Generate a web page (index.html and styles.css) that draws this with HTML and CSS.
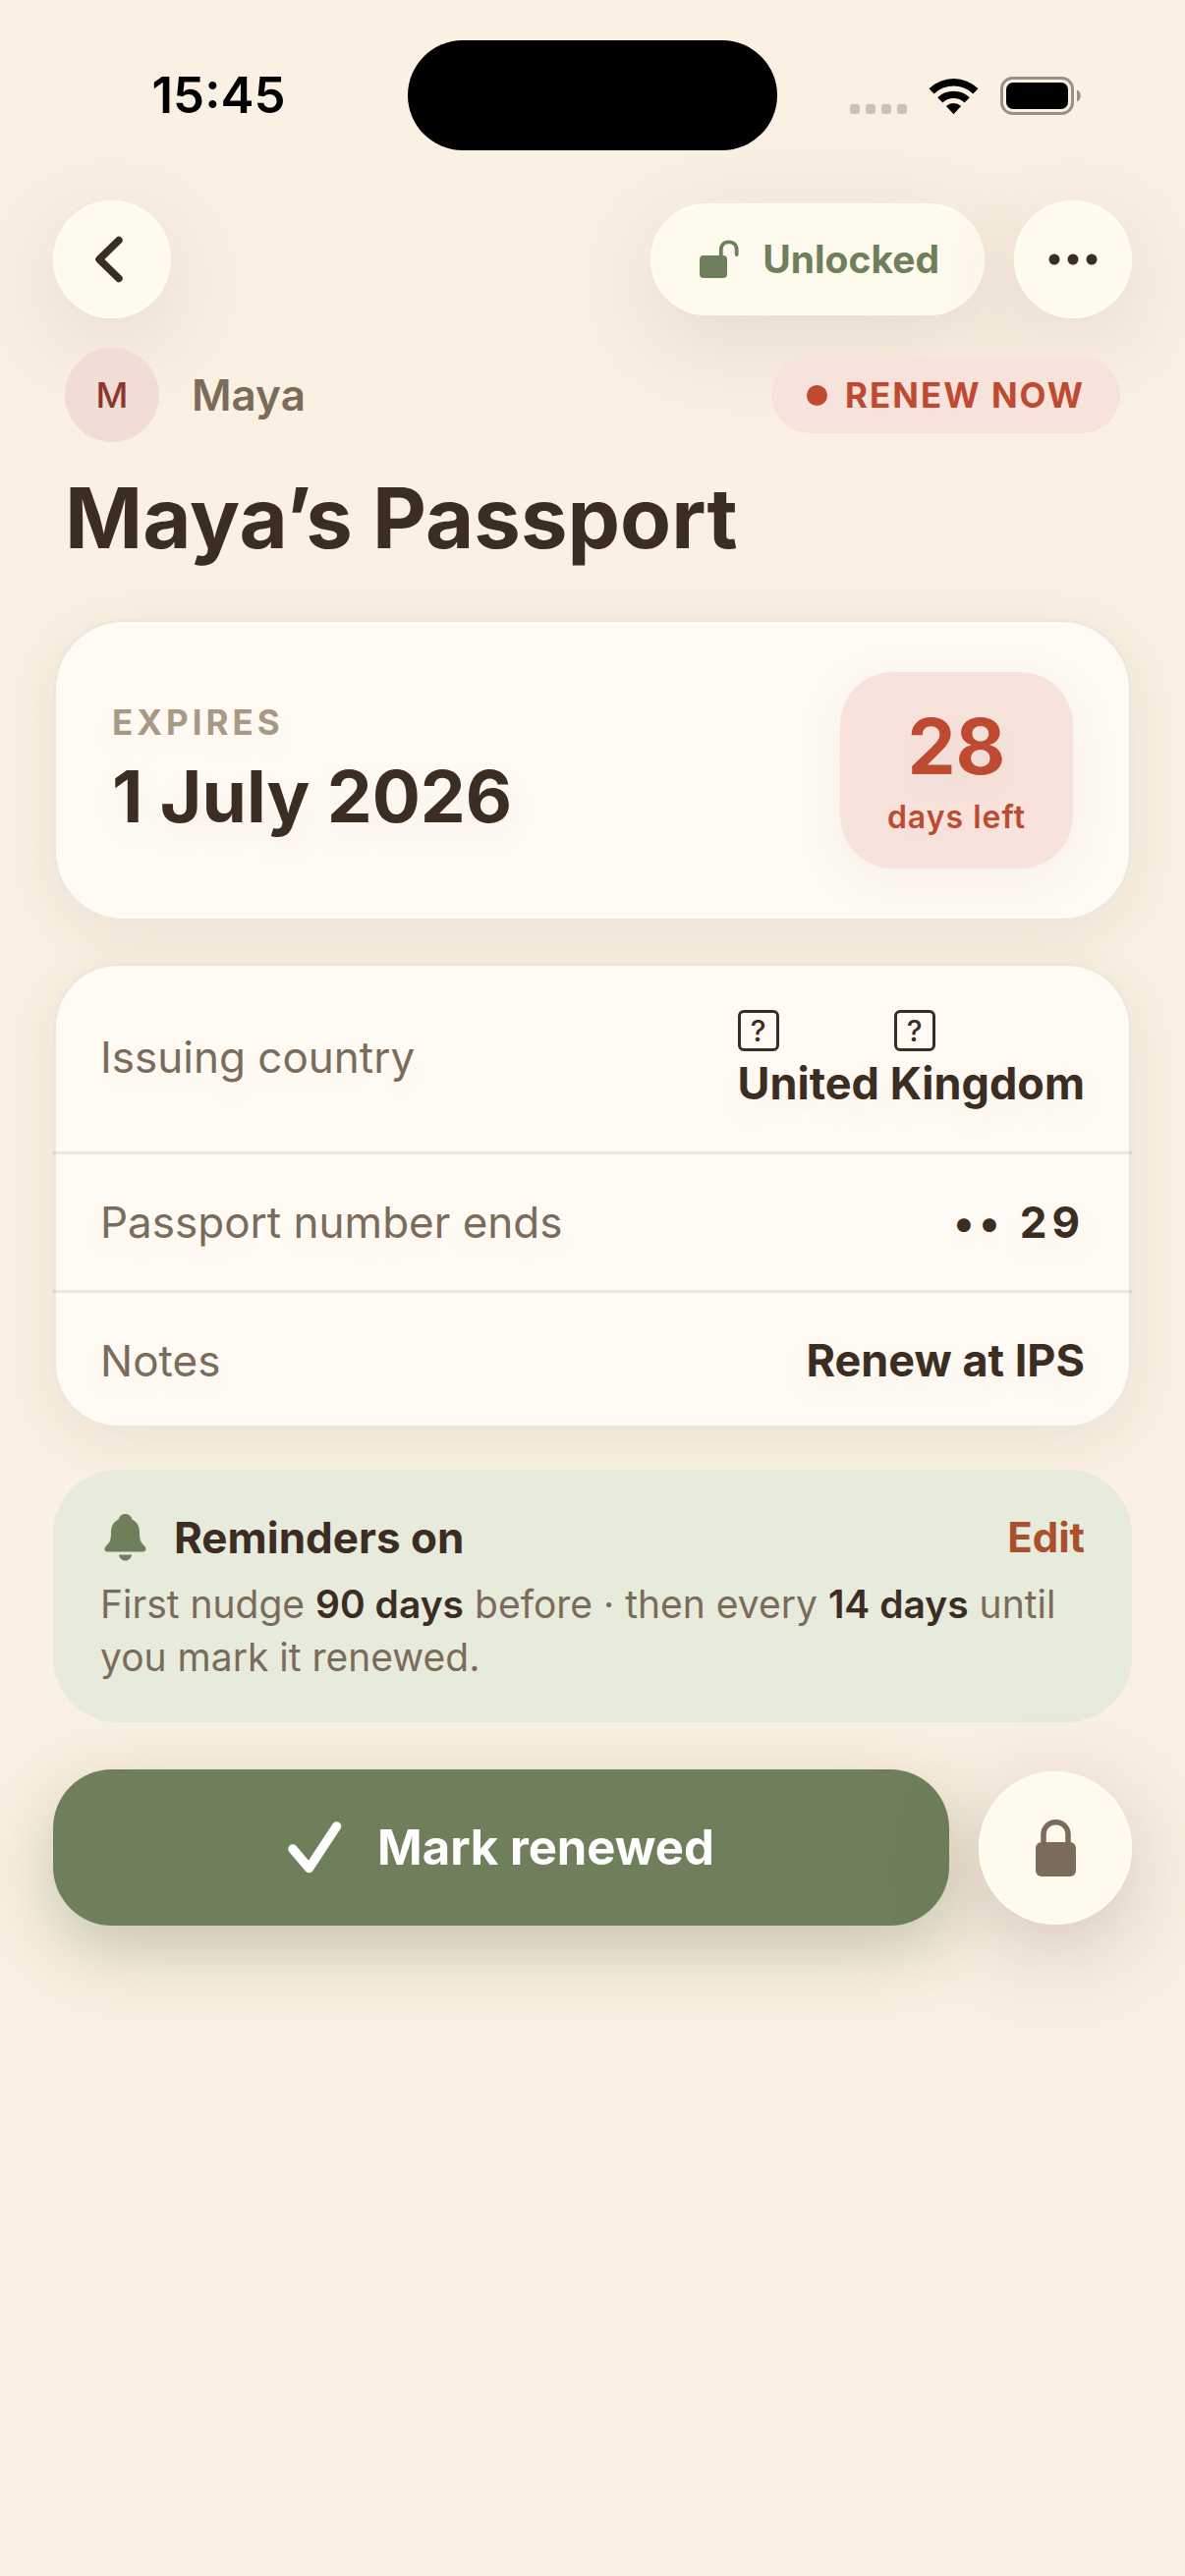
FILE: index.html
```html
<!DOCTYPE html>
<html lang="en">
<head>
    <meta charset="UTF-8">
    <meta name="viewport" content="width=device-width, initial-scale=1.0">
    <title>Maya's Passport</title>
    <link rel="stylesheet" href="styles.css">
</head>
<body>
    <!-- Status bar -->
    <div class="status-bar">
        <span class="status-time">15:45</span>
        <div class="island"></div>
        <div class="status-icons">
            <svg width="58" height="11" viewBox="0 0 58 11" fill="#cac2b4" aria-hidden="true">
                <rect x="0" width="10" height="10" rx="3"/>
                <rect x="16" width="10" height="10" rx="3"/>
                <rect x="32" width="10" height="10" rx="3"/>
                <rect x="48" width="10" height="10" rx="3"/>
            </svg>
            <svg width="51" height="38" viewBox="0 0 51 38" aria-hidden="true">
                <path d="M.5 11.2A36 36 0 0 1 50.5 11.2L45.3 16.5A28.5 28.5 0 0 0 5.7 16.5Z"/>
                <path d="M9.2 20.2A23.5 23.5 0 0 1 41.8 20.2L36.6 25.5A16 16 0 0 0 14.4 25.5Z"/>
                <path d="M17.9 29.1A11 11 0 0 1 33.1 29.1L25.5 37.2Z"/>
            </svg>
            <svg width="82" height="39" viewBox="0 0 82 39" aria-hidden="true">
                <rect x="1.5" y="1.5" width="72" height="36" rx="11" fill="none" stroke="#98918a" stroke-width="3"/>
                <rect x="6" y="6" width="63" height="27" rx="7"/>
                <path d="M78 13.5C83 15 83 24 78 25.5Z" fill="#98918a"/>
            </svg>
        </div>
    </div>

    <div class="screen">
        <!-- Navigation -->
        <header class="nav">
            <button class="round-btn" type="button" aria-label="Back">
                <svg width="36" height="48" viewBox="0 0 36 48" fill="none" stroke="#3c2d23" stroke-width="7.5" stroke-linecap="round" stroke-linejoin="round">
                    <path d="M25 4.5 5 24 25 43.5"/>
                </svg>
            </button>
            <div class="nav-actions">
                <button class="lock-state" type="button">
                    <svg width="40" height="40" viewBox="0 0 40 40" aria-hidden="true">
                        <rect x="0" y="16" width="28" height="23" rx="4" fill="#6f7f5b"/>
                        <path d="M21.8 18V10C21.8 -.3 37.7 -.3 37.7 10V15" fill="none" stroke="#6f7f5b" stroke-width="3.8" stroke-linecap="round"/>
                    </svg>
                    Unlocked
                </button>
                <button class="round-btn" type="button" aria-label="More">
                    <svg width="50" height="12" viewBox="0 0 50 12" fill="#3c2d23">
                        <circle cx="6" cy="6" r="5.5"/>
                        <circle cx="25" cy="6" r="5.5"/>
                        <circle cx="44" cy="6" r="5.5"/>
                    </svg>
                </button>
            </div>
        </header>

        <main>
            <!-- Owner and title -->
            <div class="owner-row">
                <div class="owner">
                    <span class="avatar">M</span>
                    <span class="owner-name">Maya</span>
                </div>
                <span class="status-pill">RENEW NOW</span>
            </div>
            <h1>Maya’s Passport</h1>

            <!-- Expiry -->
            <section class="card expiry">
                <div>
                    <p class="expiry-label">EXPIRES</p>
                    <p class="expiry-date">1 July 2026</p>
                </div>
                <div class="countdown">
                    <span class="countdown-number">28</span>
                    <span class="countdown-text">days left</span>
                </div>
            </section>

            <!-- Details -->
            <dl class="card details">
                <div class="row">
                    <dt>Issuing country</dt>
                    <dd>
                        <span class="flag"><span class="glyph">?</span><span class="glyph">?</span></span>
                        United Kingdom
                    </dd>
                </div>
                <div class="row">
                    <dt>Passport number ends</dt>
                    <dd class="masked">•• 29</dd>
                </div>
                <div class="row">
                    <dt>Notes</dt>
                    <dd>Renew at IPS</dd>
                </div>
            </dl>

            <!-- Reminders -->
            <section class="reminders">
                <div class="reminders-head">
                    <svg width="51" height="48" viewBox="0 0 51 48" fill="#6f7f5b" aria-hidden="true">
                        <path d="M25.5 0C29 0 31.5 2 32.2 5.2C37.5 8 40 12.5 40 18.5C40 27 41.5 29 45 32.5C46.3 34 46.5 35 46.5 36C46.5 37.5 45.3 38.5 43.5 38.5H7.5C5.7 38.5 4.5 37.5 4.5 36C4.5 35 4.7 34 6 32.5C9.5 29 11 27 11 18.5C11 12.5 13.5 8 18.8 5.2C19.5 2 22 0 25.5 0Z"/>
                        <path d="M19 41.5H32C31.5 45 29 47.5 25.5 47.5C22 47.5 19.5 45 19 41.5Z"/>
                    </svg>
                    <h2>Reminders on</h2>
                    <a class="edit" href="#edit">Edit</a>
                </div>
                <p>First nudge <strong>90 days</strong> before · then every <strong>14 days</strong> until you mark it renewed.</p>
            </section>

            <!-- Actions -->
            <div class="actions">
                <button class="primary" type="button">
                    <svg width="55" height="53" viewBox="0 0 55 53" fill="none" stroke="#fff" stroke-width="9.5" stroke-linecap="round" stroke-linejoin="round" aria-hidden="true">
                        <path d="M5 28 21.5 47.5 49.5 5"/>
                    </svg>
                    Mark renewed
                </button>
                <button class="round-btn large" type="button" aria-label="Lock">
                    <svg width="41" height="58" viewBox="0 0 41 58">
                        <rect y="23" width="41" height="35" rx="6" fill="#7b6b5a"/>
                        <path d="M8 26V15.5C8 -1.5 33 -1.5 33 15.5V26" fill="none" stroke="#7b6b5a" stroke-width="5.5"/>
                    </svg>
                </button>
            </div>
        </main>
    </div>
</body>
</html>
```
FILE: styles.css
```css
/* General */
* {
    box-sizing: border-box;
}
body {
    margin: 0;
    min-height: 100vh;
    background-color: #fbf1e2;
    color: #3c2d23;
    font-family: Inter, "Liberation Sans", sans-serif;
    font-size: 44px;
    line-height: 54px;
}
h1, h2, p, dl, dd {
    margin: 0;
}
button {
    border: 0;
    padding: 0;
    font: inherit;
    color: inherit;
    cursor: pointer;
}
svg {
    display: block;
    flex-shrink: 0;
}

/* Status bar */
.status-bar {
    display: grid;
    grid-template-columns: 1fr 376px 1fr;
    align-items: center;
    padding-top: 41px;
    color: #000;
}
.status-time {
    justify-self: center;
    padding-left: 30px;
    font-size: 51px;
    font-weight: 600;
}
.island {
    height: 112px;
    border-radius: 56px;
    background-color: #000;
}
.status-icons {
    display: flex;
    justify-content: flex-end;
    align-items: flex-end;
    gap: 22px;
    padding-right: 106px;
}

.screen {
    padding: 51px 54px 54px;
}

/* Navigation */
.nav, .nav-actions {
    display: flex;
    align-items: center;
    justify-content: space-between;
    gap: 30px;
}
.round-btn, .lock-state {
    display: flex;
    align-items: center;
    justify-content: center;
    background-color: #fffaee;
    box-shadow: inset 0 0 0 3px #fffcf0, 0 24px 96px rgba(90, 60, 50, 0.14);
}
.round-btn {
    width: 120px;
    height: 120px;
    border-radius: 50%;
    flex-shrink: 0;
}
.round-btn.large {
    width: 156px;
    height: 156px;
    box-shadow: inset 0 0 0 3px #fffcf0, 0 24px 96px rgba(90, 60, 50, 0.26);
}
.lock-state {
    gap: 24px;
    height: 114px;
    padding: 0 46px 0 50px;
    border-radius: 57px;
    color: #6f7f5b;
    font-size: 39px;
    font-weight: 700;
}

/* Owner */
.owner-row {
    display: flex;
    align-items: center;
    justify-content: space-between;
    margin-top: 30px;
    padding: 0 12px;
}
.owner {
    display: flex;
    align-items: center;
    gap: 33px;
    color: #7b6b5a;
    font-weight: 600;
}
.avatar {
    display: flex;
    align-items: center;
    justify-content: center;
    width: 96px;
    height: 96px;
    border-radius: 50%;
    background-color: #f1ddd6;
    color: #8c382b;
    font-size: 36px;
    font-weight: 500;
}
.status-pill {
    display: flex;
    align-items: center;
    gap: 18px;
    height: 78px;
    padding: 0 36px;
    border-radius: 39px;
    background-color: #f7e3dc;
    color: #bf4a32;
    font-size: 35px;
    font-weight: 700;
    letter-spacing: 2px;
}
.status-pill::before {
    content: "";
    width: 21px;
    height: 21px;
    border-radius: 50%;
    background-color: #bf4a32;
}
h1 {
    margin: 24px 0 48px;
    padding: 0 12px;
    font-size: 85px;
    line-height: 108px;
    font-weight: 700;
}

/* Cards */
.card {
    background-color: #fffaf4;
    box-shadow: inset 0 0 0 3px #ece7df, 0 12px 54px rgba(90, 70, 30, 0.09);
    text-shadow: 0 12px 36px rgba(90, 70, 30, 0.06);
}
.expiry {
    display: flex;
    align-items: center;
    justify-content: space-between;
    padding: 54px 60px;
    border-radius: 72px;
}
.expiry-label {
    color: #a89984;
    font-size: 35px;
    font-weight: 700;
    letter-spacing: 4px;
}
.expiry-date {
    font-size: 73px;
    line-height: 98px;
    font-weight: 700;
}
.countdown {
    display: flex;
    flex-direction: column;
    align-items: center;
    padding: 28px 48px;
    border-radius: 54px;
    background-color: #f7e3dc;
    box-shadow: 0 12px 54px rgba(90, 70, 30, 0.06);
    color: #bf4a32;
}
.countdown-number {
    font-size: 78px;
    line-height: 96px;
    font-weight: 700;
}
.countdown-text {
    font-size: 32px;
    line-height: 48px;
    font-weight: 600;
    letter-spacing: 1px;
}

/* Details */
.details {
    margin-top: 42px;
    border-radius: 66px;
}
.row {
    display: flex;
    align-items: center;
    justify-content: space-between;
    padding: 42px 48px;
}
.row + .row {
    border-top: 3px solid rgba(60, 45, 35, 0.09);
}
.row dt {
    color: #7b6b5a;
}
.row dd {
    font-size: 45px;
    font-weight: 700;
}
.row .masked {
    font-size: 44px;
    letter-spacing: 5px;
}
.flag {
    display: flex;
    align-items: center;
    gap: 117px;
    height: 54px;
}
.glyph {
    width: 42px;
    height: 42px;
    border: 3px solid #3c2d23;
    border-radius: 6px;
    font-size: 30px;
    line-height: 36px;
    font-weight: 500;
    text-align: center;
}

/* Reminders */
.reminders {
    margin-top: 42px;
    padding: 39px 48px;
    border-radius: 66px;
    background-color: #e7ebdc;
    color: #7b6b5a;
    font-size: 39px;
}
.reminders-head {
    display: flex;
    align-items: center;
    gap: 24px;
    height: 60px;
    margin-bottom: 11px;
    color: #3c2d23;
}
.reminders h2 {
    flex: 1;
    font-size: 44px;
    font-weight: 700;
}
.reminders strong {
    color: #3c2d23;
    font-weight: 600;
}
.edit {
    color: #a9512c;
    font-size: 42px;
    font-weight: 700;
    text-decoration: none;
}

/* Actions */
.actions {
    display: flex;
    align-items: center;
    gap: 30px;
    margin-top: 48px;
}
.primary {
    flex: 1;
    display: flex;
    align-items: center;
    justify-content: center;
    gap: 36px;
    height: 159px;
    border-radius: 60px;
    background-color: #6f7f5b;
    box-shadow: 0 24px 72px rgba(80, 95, 60, 0.32);
    color: #fff;
    font-size: 49px;
    font-weight: 700;
}
```
